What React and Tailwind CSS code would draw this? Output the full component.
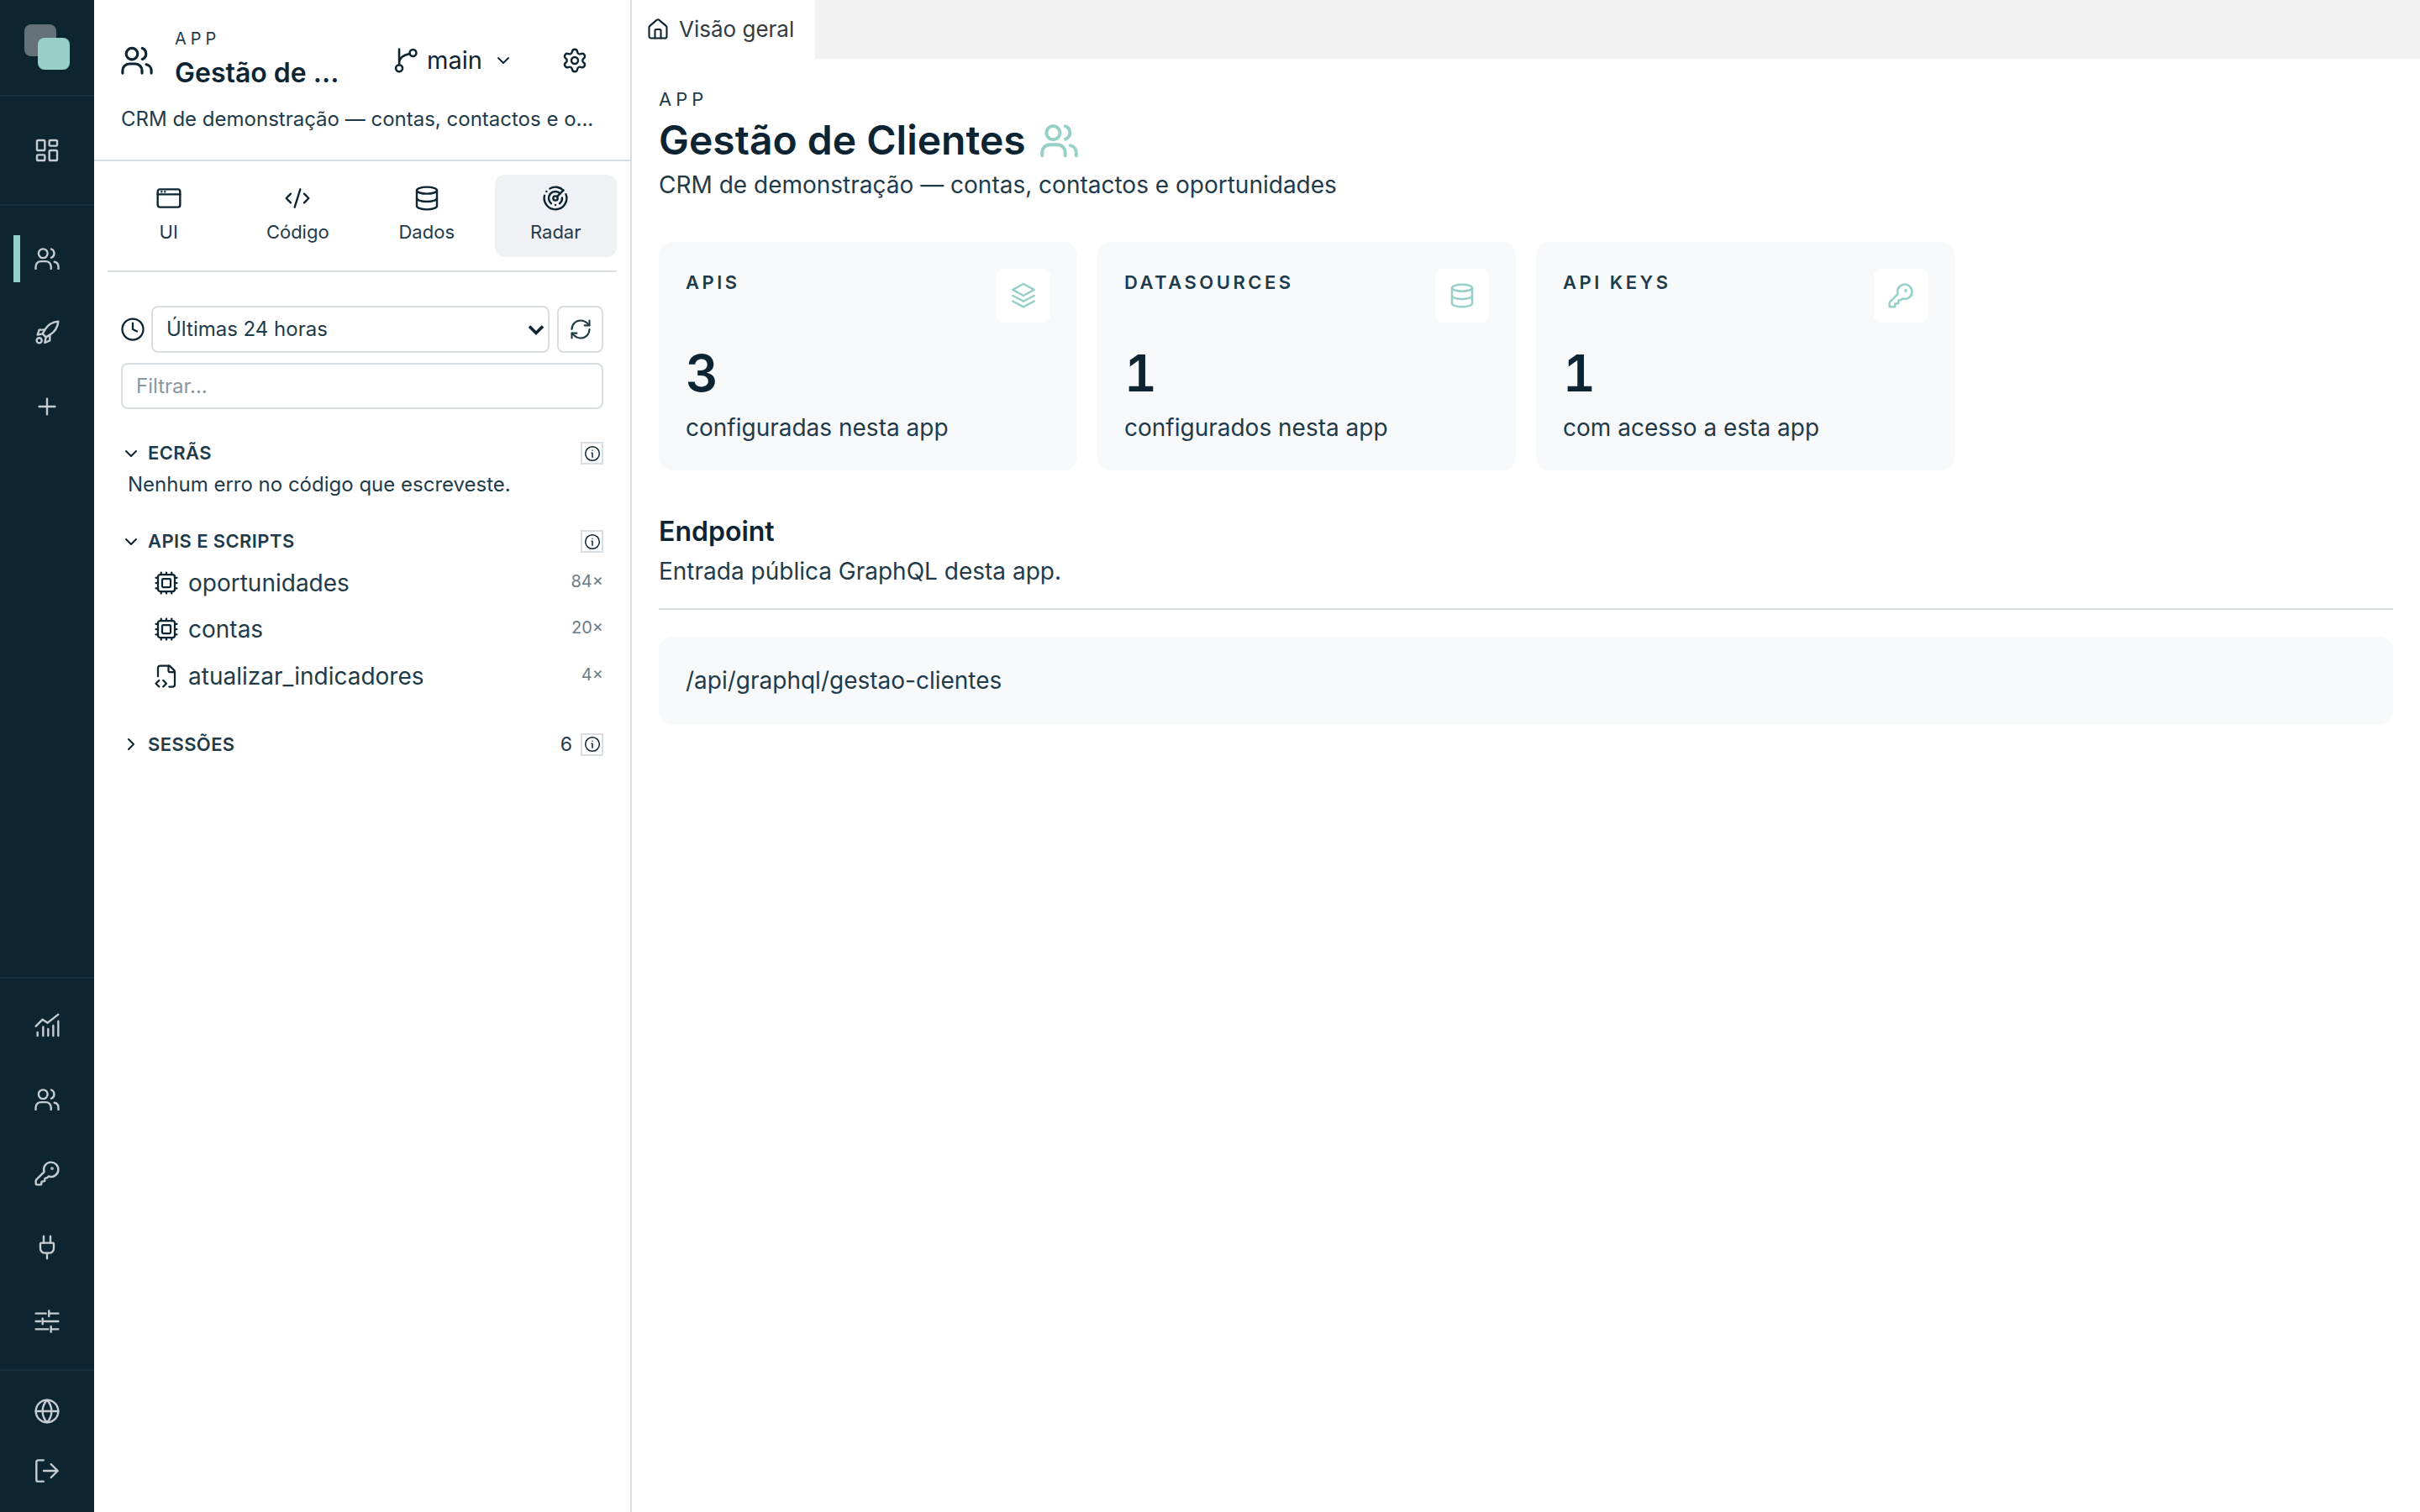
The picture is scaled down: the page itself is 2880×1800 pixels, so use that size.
import React from "react";
import { Radar, Database, CodeXml, Cpu, KeyRound, Plug, Globe, RefreshCw, Clock, Settings, House, ChevronDown, ChevronRight, Plus, LayoutDashboard } from "lucide-react";

const I = ({ size = 24, w = 1.8, className = "", children }) => (
  <svg width={size} height={size} viewBox="0 0 24 24" fill="none" stroke="currentColor" strokeWidth={w} strokeLinecap="round" strokeLinejoin="round" className={className}>
    {children}
  </svg>
);
const Users = (p) => (
  <I {...p}>
    <circle cx="8.2" cy="7" r="4.3" />
    <path d="M1.2 21.5v-2a5 5 0 0 1 5-5h4.6a5 5 0 0 1 5 5v2" />
    <path d="M16 2.8a4.4 4.4 0 0 1 0 8.2" />
    <path d="M19 15a4.6 4.6 0 0 1 3.8 4.4v2.1" />
  </I>
);
const Rocket = (p) => (
  <I {...p}>
    <path d="M22 2c-5.500.5-9 2.500-12 7.500L8 13l3 3 3.500-2c5-3 7-6.500 7.500-12Z" />
    <path d="M10 9.500 5 9.500 3.500 14 8 13" />
    <path d="M14.500 14v5l-4.500 2L11 16" />
    <circle cx="5" cy="19" r="2.300" />
  </I>
);
const Chart = (p) => (
  <I {...p}>
    <path d="M2 12.500 8 6.500l4.500 3L22 2" />
    <path d="M3.500 18v3M8.500 13v8M13 15v6M17.500 12v9M22 8v13" />
  </I>
);
const Sliders = (p) => (
  <I {...p}>
    <path d="M2 5h9M13.700 2.500v5M13.700 5H22" />
    <path d="M2 12h4M8 9.500v5M8 12h14" />
    <path d="M2 19h11M15.500 16.500v5M15.500 19H22" />
  </I>
);
const Exit = (p) => (
  <I {...p}>
    <path d="M8.800 2.500H4a1.500 1.500 0 0 0-1.500 1.500v16A1.500 1.500 0 0 0 4 21.500h4.800" />
    <path d="M9 12h12.500M15.500 6l6 6-6 6" />
  </I>
);
const Branch = (p) => (
  <I {...p}>
    <circle cx="6.400" cy="18.500" r="2.800" />
    <circle cx="18" cy="5.600" r="2.800" />
    <path d="M6.400 15.700V2.500M6.400 14c0-4 3-6.500 8.900-7.700" />
  </I>
);
const Win = (p) => (
  <I {...p}>
    <rect x="2" y="4" width="20" height="16" rx="2" />
    <path d="M2 8.500h20M5.500 6.200h.01M8.500 6.200h.01" />
  </I>
);
const Layers = (p) => (
  <I {...p}>
    <path d="M12 1.500l9.500 5.200L12 12 2.500 6.700Z" />
    <path d="M2.500 12l9.500 5 9.500-5" />
    <path d="M2.500 17l9.500 5 9.500-5" />
  </I>
);
const FileC = (p) => (
  <I {...p}>
    <path d="M4 12.150V4a2 2 0 0 1 2-2h8a2.400 2.400 0 0 1 1.706.706l3.588 3.588A2.400 2.400 0 0 1 20 8v12a2 2 0 0 1-2 2h-3.350" />
    <path d="M14 2v5a1 1 0 0 0 1 1h5" />
    <path d="m5 16-3 3 3 3" />
    <path d="m9 22 3-3-3-3" />
  </I>
);
const Info = () => (
  <span className="flex h-[27px] w-[27px] items-center justify-center border-2 border-[#d9dee3] text-[#0d2532]">
    <I size={20} w={1.8}>
      <circle cx="12" cy="12" r="10" />
      <path d="M12 17v-6M11 11h1M12 7.500h.01" />
    </I>
  </span>
);

const RailItem = ({ children, active, h = "h-[88px]" }) => (
  <div className={`relative flex w-full items-center justify-center text-[#c6cdd1] ${h}`}>
    {active && <span className="absolute left-4 top-4 h-14 w-2 bg-[#97d0c8]" />}
    {children}
  </div>
);

const Tab = ({ icon, label, active }) => (
  <div className={`flex h-[98px] flex-col items-center rounded-xl pt-[11px] ${active ? "bg-[#eff1f5]" : ""}`}>
    <div className="flex h-[34px] items-center">{icon}</div>
    <span className="mt-[9px] text-[22px] leading-7 text-[#1f3b4a]">{label}</span>
  </div>
);

const Section = ({ label, open = true, right }) => (
  <div className="flex h-[27px] items-center justify-between">
    <div className="flex items-center">
      <span className="flex w-8 justify-start text-[#0d2532]">
        {open ? <ChevronDown size={24} strokeWidth={2} /> : <ChevronRight size={24} strokeWidth={2} />}
      </span>
      <span className="text-[22px] font-semibold tracking-[0.4px] text-[#1f3b4a]">{label}</span>
    </div>
    <div className="flex items-center gap-[10px]">
      {right && <span className="text-[23px] text-[#1f3b4a]">{right}</span>}
      <Info />
    </div>
  </div>
);

const ApiRow = ({ icon, label, count }) => (
  <div className="flex h-[55.500px] items-center justify-between">
    <div className="flex items-center gap-[11px] pl-[39px]">
      {icon}
      <span className="text-[28px] text-[#1f3b4a]">{label}</span>
    </div>
    <span className="-mt-[4px] text-[20px] text-[#6b7c86]">{count}</span>
  </div>
);

const Card = ({ label, icon, value, sub }) => (
  <div className="h-[272px] flex-1 rounded-2xl bg-[#f8f9fb] p-8">
    <div className="flex h-16 items-start justify-between">
      <span className="mt-[3px] text-[22px] font-semibold leading-[26px] tracking-[3.500px] text-[#1f3b4a]">{label}</span>
      <span className="flex h-16 w-16 items-center justify-center rounded-lg bg-white text-[#97d0c8]">{icon}</span>
    </div>
    <div className="mt-[24px] text-[60px] font-semibold leading-[72px] tabular-nums text-[#0d2532]">{value}</div>
    <div className="mt-[11px] text-[28px] leading-[36px] text-[#1f3b4a]">{sub}</div>
  </div>
);

export default function App() {
  return (
    <div className="flex h-[1800px] w-[2880px] overflow-hidden bg-white font-['Inter',sans-serif] text-[#0d2532]">
      <aside className="flex w-[112px] shrink-0 flex-col bg-[#0d2431]">
        <div className="h-[115px] border-b-2 border-[#16303f] pl-[29px] pt-[29px]">
          <div className="relative h-[54px] w-[54px]">
            <span className="absolute left-0 top-0 h-[38px] w-[38px] rounded-lg bg-[#647179]" />
            <span className="absolute bottom-0 right-0 h-[38px] w-[38px] rounded-lg bg-[#97d0c8]" />
          </div>
        </div>
        <div className="flex h-[130px] items-center justify-center border-b-2 border-[#16303f] text-[#c6cdd1]">
          <LayoutDashboard size={32} strokeWidth={1.8} />
        </div>
        <div className="flex-1 pt-[19px]">
          <RailItem active><Users size={30} w={1.9} /></RailItem>
          <RailItem><Rocket size={32} /></RailItem>
          <RailItem><Plus size={32} strokeWidth={1.8} /></RailItem>
        </div>
        <div className="border-t-2 border-[#16303f] pt-3 pb-[13px]">
          <RailItem><Chart size={32} /></RailItem>
          <RailItem><Users size={30} w={1.9} /></RailItem>
          <RailItem><KeyRound size={32} strokeWidth={1.8} /></RailItem>
          <RailItem><Plug size={32} strokeWidth={1.8} /></RailItem>
          <RailItem><Sliders size={32} /></RailItem>
        </div>
        <div className="border-t-2 border-[#16303f] pb-[14px] pt-3">
          <RailItem h="h-[71px]"><Globe size={32} strokeWidth={1.8} /></RailItem>
          <RailItem h="h-[71px]"><Exit size={32} /></RailItem>
        </div>
      </aside>

      <section className="flex w-[640px] shrink-0 flex-col border-r-2 border-[#d9dee3]">
        <div className="h-[192px] border-b-2 border-[#d9dee3] px-8 pt-7">
          <div className="flex h-[88px] items-center">
            <Users size={38} w={2} />
            <div className="ml-[26px] w-[220px] pb-[2px]">
              <div className="text-[20px] leading-6 tracking-[5px] text-[#1f3b4a]">APP</div>
              <div className="mt-[8px] text-[32px] font-semibold leading-[42px]">Gestão de ...</div>
            </div>
            <div className="ml-[38px] flex items-center">
              <Branch size={34} />
              <span className="ml-[8px] text-[29px]">main</span>
              <ChevronDown size={24} strokeWidth={1.8} className="ml-[13px]" />
            </div>
            <Settings size={32} strokeWidth={1.8} className="ml-[57px]" />
          </div>
          <div className="mt-[10px] whitespace-nowrap text-[24px] leading-8 text-[#1f3b4a]">CRM de demonstração — contas, contactos e o...</div>
        </div>

        <div className="mx-4 mt-4 grid grid-cols-4 gap-2 border-b-2 border-[#d9dee3] pb-4">
          <Tab icon={<Win size={32} />} label="UI" />
          <Tab icon={<CodeXml size={32} strokeWidth={1.8} />} label="Código" />
          <Tab icon={<Database size={32} strokeWidth={1.8} />} label="Dados" />
          <Tab icon={<Radar size={32} strokeWidth={1.8} />} label="Radar" active />
        </div>

        <div className="px-8 pt-10">
          <div className="flex items-center">
            <Clock size={30} strokeWidth={1.8} className="-ml-[1px] shrink-0" />
            <div className="relative ml-[7px] h-14 flex-1">
              <select className="h-full w-full appearance-none rounded-lg border-2 border-[#d9dee3] bg-white pl-4 text-[24px] text-[#1f3b4a]" defaultValue="24">
                <option value="24">Últimas 24 horas</option>
              </select>
              <svg width="20" height="14" viewBox="0 0 20 14" fill="none" stroke="#0d2532" strokeWidth="3.600" className="pointer-events-none absolute right-[6px] top-[22px]">
                <path d="M2 2.500l8 8 8-8" />
              </svg>
            </div>
            <button className="ml-[9px] flex h-14 w-[55px] items-center justify-center rounded-lg border-2 border-[#d9dee3] text-[#1f3b4a]">
              <RefreshCw size={28} strokeWidth={1.8} />
            </button>
          </div>
          <input placeholder="Filtrar..." className="mt-[12px] block h-[55px] w-full rounded-lg border-2 border-[#d9dee3] px-4 text-[24px] placeholder:text-[#8a969d]" />

          <div className="mt-[39px]">
            <Section label="ECRÃS" />
            <div className="ml-2 mt-[8px] text-[24px] leading-8 text-[#1f3b4a]">Nenhum erro no código que escreveste.</div>
          </div>
          <div className="mt-[38px]">
            <Section label="APIS E SCRIPTS" />
            <div className="mt-[8px]">
              <ApiRow icon={<Cpu size={30} strokeWidth={1.8} />} label="oportunidades" count="84×" />
              <ApiRow icon={<Cpu size={30} strokeWidth={1.8} />} label="contas" count="20×" />
              <ApiRow icon={<FileC size={30} />} label="atualizar_indicadores" count="4×" />
            </div>
          </div>
          <div className="mt-[40px]">
            <Section label="SESSÕES" open={false} right="6" />
          </div>
        </div>
      </section>

      <main className="flex min-w-0 flex-1 flex-col">
        <div className="h-[70px] bg-[#f2f2f2]">
          <div className="flex h-full w-[218px] items-center bg-white pl-[17px]">
            <House size={28} strokeWidth={1.8} className="text-[#0d2532]" />
            <span className="mb-[2px] ml-[11px] text-[26px] text-[#333b40]">Visão geral</span>
          </div>
        </div>
        <div className="px-8">
          <div className="mt-[36px] text-[22px] leading-6 tracking-[5px] text-[#1f3b4a]">APP</div>
          <div className="mt-[7px] flex items-center">
            <h1 className="text-[48px] font-semibold leading-[60px]">Gestão de Clientes</h1>
            <span className="ml-[17px] text-[#97d0c8]"><Users size={45} w={2.1} /></span>
          </div>
          <p className="mt-[5px] text-[28px] leading-9 text-[#1f3b4a]">CRM de demonstração — contas, contactos e oportunidades</p>

          <div className="mt-[50px] flex w-[1542px] gap-6">
            <Card label="APIS" icon={<Layers size={32} w={1.9} />} value="3" sub="configuradas nesta app" />
            <Card label="DATASOURCES" icon={<Database size={32} strokeWidth={1.9} />} value="1" sub="configurados nesta app" />
            <Card label="API KEYS" icon={<KeyRound size={32} strokeWidth={1.9} />} value="1" sub="com acesso a esta app" />
          </div>

          <h2 className="mt-[52px] text-[32px] font-semibold leading-[42px]">Endpoint</h2>
          <p className="mt-[8px] text-[28px] leading-9 text-[#1f3b4a]">Entrada pública GraphQL desta app.</p>
          <div className="mt-[26px] h-[2px] bg-[#d9dee3]" />
          <div className="mt-8 flex h-[104px] items-center rounded-2xl bg-[#f8f9fb] px-8 text-[28px] text-[#1f3b4a]">/api/graphql/gestao-clientes</div>
        </div>
      </main>
    </div>
  );
}
